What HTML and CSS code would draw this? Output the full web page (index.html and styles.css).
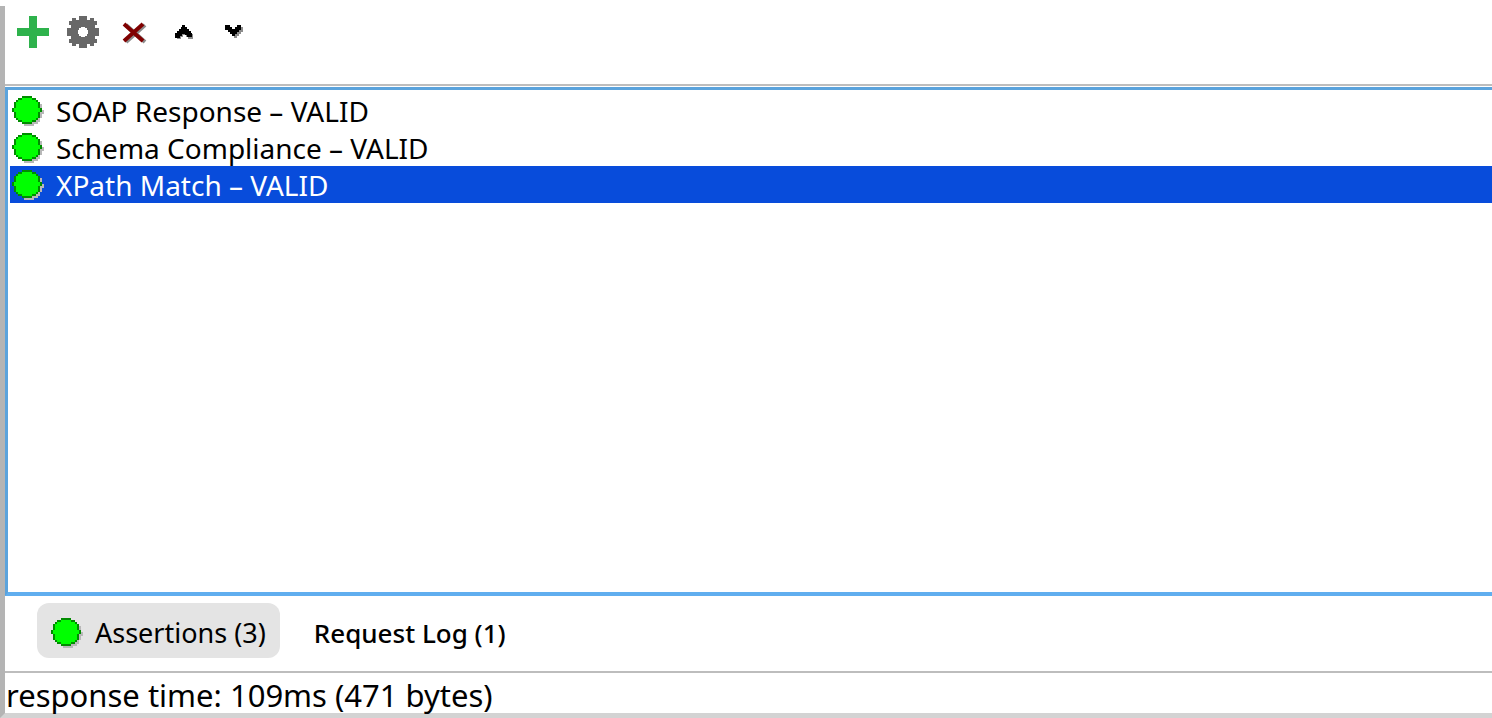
FILE: index.html
```html
<!DOCTYPE html>
<html lang="en">
<head>
<meta charset="utf-8">
<title>Assertions</title>
<link rel="stylesheet" href="styles.css">
</head>
<body>
<svg class="symbols" aria-hidden="true">
  <symbol id="status" viewBox="0 0 16 15">
    <path class="ball-shadow" d="M13 3h1v1h1v3h1v2h-1v2h-1v2h-1v1h-2v1H6v-1H5z"/>
    <path class="ball-edge" d="M5 0h5v1h2v1h1v1h1v3h1v2h-1v3h-1v1h-1v1h-2v1H5v-1H3v-1H2v-1H1V8H0V6h1V3h1V2h1V1h2z"/>
    <path class="ball" d="M5 1h5v1h2v1h1v3h1v2h-1v3h-1v1h-2v1H5v-1H3v-1H2V8H1V6h1V3h1V2h2z"/>
  </symbol>
</svg>
<main class="panel">
  <div class="toolbar" role="toolbar" aria-label="Assertion actions">
    <button class="tool" type="button" aria-label="Add assertion">
      <svg viewBox="0 0 32 32"><path fill="#2eb24c" d="M12 0h8v12h12v8H20v12h-8V20H0v-8h12z"/></svg>
    </button>
    <button class="tool" type="button" aria-label="Configure assertion">
      <svg viewBox="0 0 32 32"><path fill="#686868" fill-rule="evenodd" d="M12 0h8v4h3V2h4v3h3v4h-2v3h4v8h-4v3h2v4h-3v3h-4v-2h-3v4h-8v-4H9v2H5v-3H2v-4h2v-3H0v-8h4V9H2V5h3V2h4v2h3zM14 11v1h-2v2h-1v4h1v2h2v1h4v-1h2v-2h1v-4h-1v-2h-2v-1z"/></svg>
    </button>
    <button class="tool" type="button" aria-label="Remove assertion">
      <svg viewBox="0 0 32 32">
        <path class="cross-drop" d="M9 9L28 26M28 9L9 26"/>
        <path class="cross" d="M7 8L26 25M26 8L7 25"/>
      </svg>
    </button>
    <button class="tool" type="button" aria-label="Move assertion up">
      <svg viewBox="0 0 32 32">
        <path class="drop" d="M17 12h3v2h2v2h2v2h2v5h-5v-2h-2v-2h-3v2h-2v2h-4v-4h2z"/>
        <path d="M15 9h3v2h2v2h2v2h2v2h1v4h-5v-2h-2v-1h-3v2h-2v2H8v-5h2v-2h2v-2h2v-2h1z"/>
      </svg>
    </button>
    <button class="tool" type="button" aria-label="Move assertion down">
      <svg viewBox="0 0 32 32">
        <path class="drop" d="M21 11h5v5h-2v2h-2v2h-2v2h-3v-2h-2v-2z"/>
        <path d="M8 9h5v2h2v2h3v-2h2V9h4v5h-2v2h-2v2h-2v2h-3v-2h-2v-2h-2v-2H8z"/>
      </svg>
    </button>
  </div>
  <ul class="assertions" role="listbox" aria-label="Assertions">
    <li class="row" role="option" aria-selected="false"><svg class="status"><use href="#status"/></svg>SOAP Response – VALID</li>
    <li class="row" role="option" aria-selected="false"><svg class="status"><use href="#status"/></svg>Schema Compliance – VALID</li>
    <li class="row selected" role="option" aria-selected="true"><svg class="status"><use href="#status"/></svg>XPath Match – VALID</li>
  </ul>
  <div class="tabs" role="tablist">
    <button class="tab active" type="button" role="tab" aria-selected="true"><svg class="status"><use href="#status"/></svg>Assertions (3)</button>
    <button class="tab log" type="button" role="tab" aria-selected="false">Request Log (1)</button>
  </div>
  <footer class="response">response time: 109ms (471 bytes)</footer>
</main>
</body>
</html>
```
FILE: styles.css
```css
* { box-sizing: border-box; }

body {
  margin: 0;
  height: 100vh;
  padding-top: 6px;
  background: #fff;
  color: #000;
  font-family: "Noto Sans", "Open Sans", sans-serif;
  font-size: 28px;
}

button {
  border: 0;
  background: none;
  color: inherit;
  font: inherit;
}

.symbols { position: absolute; width: 0; height: 0; }

.panel {
  display: flex;
  flex-direction: column;
  height: 100%;
  border-left: 5px solid #b4b4b4;
  border-bottom: 5px solid #d3d3d3;
}

.toolbar {
  display: flex;
  gap: 18px;
  padding: 10px 12px 36px;
  border-bottom: 2px solid #bdbdbd;
}

.tool { padding: 0; width: 32px; height: 32px; }
.tool svg { display: block; width: 32px; height: 32px; }
.drop { fill: #8c8c8c; }
.cross { stroke: #800000; stroke-width: 4; }
.cross-drop { stroke: #8c8c8c; stroke-width: 4; }

.assertions {
  flex: 1;
  margin: 1px 0 0;
  padding: 2px 0 0 2px;
  list-style: none;
  border: solid #5ba3dc;
  border-width: 3px 0 4px 3px;
  border-bottom-color: #60aeef;
}

.row {
  display: flex;
  align-items: center;
  gap: 12px;
  height: 37px;
  padding-left: 2px;
  white-space: nowrap;
}

.selected { background: #084cdb; color: #fff; }

.status { flex: none; width: 32px; height: 30px; }
.ball { fill: #0f0; }
.ball-shadow { fill: #b8b8b8; }
.ball-edge { fill: #008c00; }

.tabs {
  display: flex;
  gap: 20px;
  padding: 7px 32px 13px;
}

.tab {
  display: flex;
  align-items: center;
  gap: 12px;
  height: 55px;
  padding: 4px 14px 0;
  border-radius: 12px;
  white-space: nowrap;
}

.active { background: #e4e4e4; font-size: 27px; }
.log { font-size: 26px; font-weight: 500; }

.response {
  height: 42px;
  border-top: 2px solid #bdbdbd;
  padding-left: 1px;
  font-size: 31px;
  line-height: 44px;
  white-space: nowrap;
}
```
